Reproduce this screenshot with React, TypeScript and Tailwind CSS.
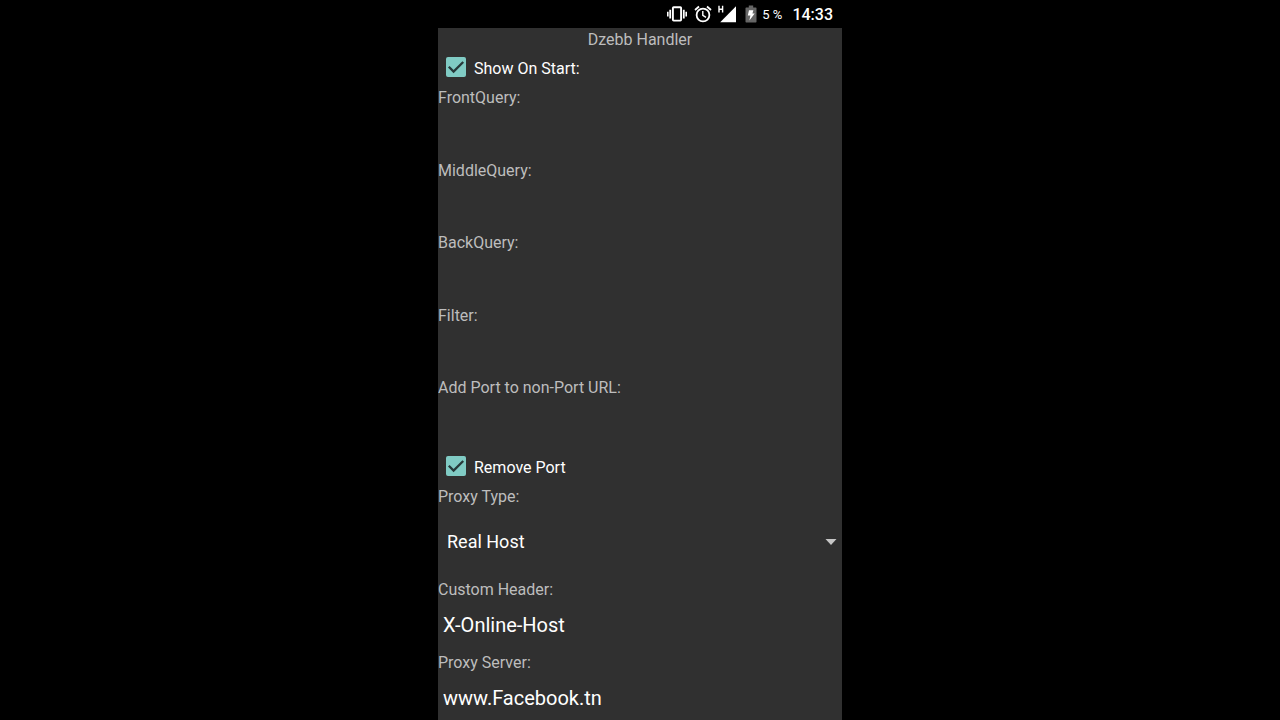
import { useId, useState } from "react";

function StatusBar() {
  return (
    <header className="flex h-7 shrink-0 items-center justify-end bg-black pr-[9px] text-white">
      <svg className="mr-[7px] h-5 w-5" viewBox="0 0 20 20" fill="none" stroke="currentColor" aria-label="Vibrate">
        <rect x="5.9" y="3.2" width="8.2" height="13.4" rx="0.8" strokeWidth="1.9" />
        <path d="M3.2 5.7v8.8M16.8 5.7v8.8" strokeWidth="1.8" />
        <path d="M0.8 7.8v4.6M19.2 7.8v4.6" strokeWidth="1.6" />
      </svg>
      <svg className="mr-[6px] h-[18px] w-[18px]" viewBox="0 0 18 18" fill="none" stroke="currentColor" aria-label="Alarm">
        <circle cx="9" cy="10" r="6.4" strokeWidth="1.8" />
        <path d="M1 5l4-3.5M17 5l-4-3.5" strokeWidth="1.8" />
        <path d="M8.8 6v4.4l3.2 2" strokeWidth="1.4" />
      </svg>
      <svg className="mr-2 h-5 w-[19px]" viewBox="0 0 19 20" aria-label="Mobile signal">
        <path d="M1 1.8v6.8M4.6 1.8v6.8M1 5.2h3.6" stroke="currentColor" strokeWidth="1.4" />
        <path d="M18 2.2v16H2.2z" fill="currentColor" />
      </svg>
      <svg className="mr-[5px] h-[18px] w-3" viewBox="0 0 12 18" aria-label="Charging">
        <path d="M3.8 0.6h4.4v2h2.6q.7 0 .7.7v13.4q0 .7-.7.7H1.2q-.7 0-.7-.7V3.3q0-.7.7-.7h2.6z" fill="#666" />
        <path d="M4 5.2h4.4L7.4 8.4h2.3L4.4 15.4l1-4.8H2.8z" fill="#fff" />
      </svg>
      <span className="mr-[10px] text-[13px] leading-none">5 %</span>
      <span className="pt-[2px] text-base font-medium">14:33</span>
    </header>
  );
}

function CheckRow({ label }: { label: string }) {
  const [checked, setChecked] = useState(true);
  return (
    <label className="flex h-9 items-center gap-2 pl-2 text-base text-white">
      <span className="grid pb-[2px]">
        <input
          type="checkbox"
          checked={checked}
          onChange={(e) => setChecked(e.target.checked)}
          className="peer col-start-1 row-start-1 h-5 w-5 appearance-none rounded-[2px] border-2 border-[#c0c0c0] checked:border-0 checked:bg-[#80cbc4]"
        />
        <svg className="pointer-events-none invisible col-start-1 row-start-1 h-5 w-5 peer-checked:visible" viewBox="0 0 20 20" fill="none">
          <path d="M2.8 9.8l4.8 4.8L17.2 5" stroke="#27393a" strokeWidth="2.3" />
        </svg>
      </span>
      <span className="pt-[2px]">{label}</span>
    </label>
  );
}

function TextField({ label, value = "" }: { label: string; value?: string }) {
  const id = useId();
  return (
    <div className="flex flex-col">
      <label htmlFor={id} className="h-[22px] text-base leading-6 text-[#bdbdbd]">
        {label}
      </label>
      <input
        id={id}
        type="text"
        defaultValue={value}
        className="min-h-[50px] w-full grow bg-transparent px-[5px] pb-[2px] text-xl text-white outline-none"
      />
    </div>
  );
}

function ProxyType() {
  return (
    <div className="flex flex-col">
      <label htmlFor="proxy-type" className="h-[22px] text-base leading-6 text-[#bdbdbd]">
        Proxy Type:
      </label>
      <div className="grid items-center">
        <select
          id="proxy-type"
          className="col-start-1 row-start-1 h-[71px] w-full appearance-none bg-transparent px-[9px] pb-[2px] text-lg text-white outline-none"
        >
          <option>Real Host</option>
        </select>
        <svg className="pointer-events-none col-start-1 row-start-1 mr-[5px] mb-[2px] h-[6px] w-3 justify-self-end" viewBox="0 0 12 6">
          <path d="M0.5 0h11L6 6z" fill="#c6c6c6" />
        </svg>
      </div>
    </div>
  );
}

const queries = ["FrontQuery:", "MiddleQuery:", "BackQuery:", "Filter:", "Add Port to non-Port URL:"];

export default function App() {
  return (
    <div className="h-screen overflow-hidden bg-black font-['Roboto',sans-serif]">
      <div className="mx-auto flex h-full w-full max-w-[404px] flex-col">
        <StatusBar />
        <main className="grow overflow-y-auto bg-[#303030] [scrollbar-width:none]">
          <h1 className="h-[22px] text-center text-base leading-6 text-[#bdbdbd]">Dzebb Handler</h1>
          <CheckRow label="Show On Start:" />
          <div className="grid min-h-[363px] auto-rows-fr">
            {queries.map((label) => (
              <TextField key={label} label={label} />
            ))}
          </div>
          <CheckRow label="Remove Port" />
          <ProxyType />
          <div className="grid min-h-[146px] auto-rows-fr">
            <TextField label="Custom Header:" value="X-Online-Host" />
            <TextField label="Proxy Server:" value="www.Facebook.tn" />
          </div>
        </main>
      </div>
    </div>
  );
}
